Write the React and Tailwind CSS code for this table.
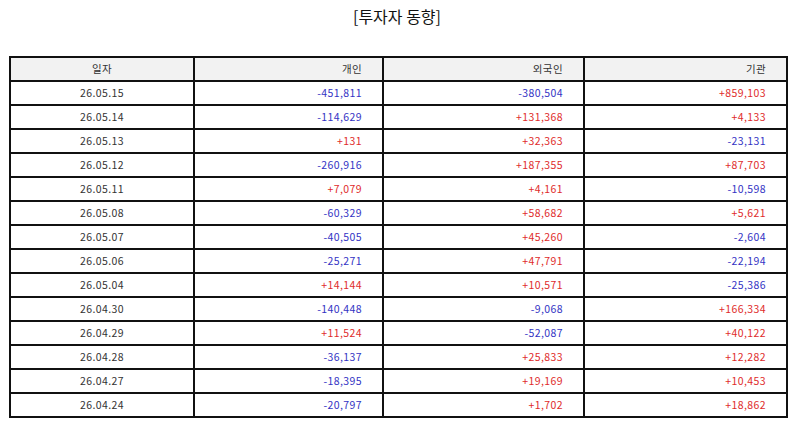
const rows = [
  ["26.05.15", "-451,811", "-380,504", "+859,103"],
  ["26.05.14", "-114,629", "+131,368", "+4,133"],
  ["26.05.13", "+131", "+32,363", "-23,131"],
  ["26.05.12", "-260,916", "+187,355", "+87,703"],
  ["26.05.11", "+7,079", "+4,161", "-10,598"],
  ["26.05.08", "-60,329", "+58,682", "+5,621"],
  ["26.05.07", "-40,505", "+45,260", "-2,604"],
  ["26.05.06", "-25,271", "+47,791", "-22,194"],
  ["26.05.04", "+14,144", "+10,571", "-25,386"],
  ["26.04.30", "-140,448", "-9,068", "+166,334"],
  ["26.04.29", "+11,524", "-52,087", "+40,122"],
  ["26.04.28", "-36,137", "+25,833", "+12,282"],
  ["26.04.27", "-18,395", "+19,169", "+10,453"],
  ["26.04.24", "-20,797", "+1,702", "+18,862"],
];

function Num({ v }) {
  const cls = v.startsWith("-") ? "text-[#3333c4]" : "text-[#e02b2b]";
  return (
    <td className={`border-2 border-[#111] text-right pr-5 ${cls}`}>{v}</td>
  );
}

export default function App() {
  return (
    <div
      className="w-[794px] h-[425px] bg-white overflow-hidden"
      style={{ fontFamily: '"Noto Sans CJK KR", "Noto Sans", sans-serif' }}
    >
      <div className="h-[37px] pt-[5px] text-center text-[16px] leading-[22px] text-[#111]">
        [투자자 동향]
      </div>
      <div className="pl-[9px] pt-[19px]">
        <table className="border-collapse w-[777px] table-fixed text-[10.5px] tracking-[0.4px] text-[#333]">
          <colgroup>
            <col className="w-[184px]" />
            <col className="w-[189px]" />
            <col className="w-[201px]" />
            <col className="w-[203px]" />
          </colgroup>
          <thead>
            <tr className="h-[24px] bg-[#f2f2f2]">
              <th className="border-2 border-[#111] font-normal text-center">일자</th>
              <th className="border-2 border-[#111] font-normal text-right pr-5">개인</th>
              <th className="border-2 border-[#111] font-normal text-right pr-5">외국인</th>
              <th className="border-2 border-[#111] font-normal text-right pr-5">기관</th>
            </tr>
          </thead>
          <tbody>
            {rows.map((r) => (
              <tr key={r[0]} className="h-[24px]">
                <td className="border-2 border-[#111] text-center">{r[0]}</td>
                <Num v={r[1]} />
                <Num v={r[2]} />
                <Num v={r[3]} />
              </tr>
            ))}
          </tbody>
        </table>
      </div>
    </div>
  );
}
